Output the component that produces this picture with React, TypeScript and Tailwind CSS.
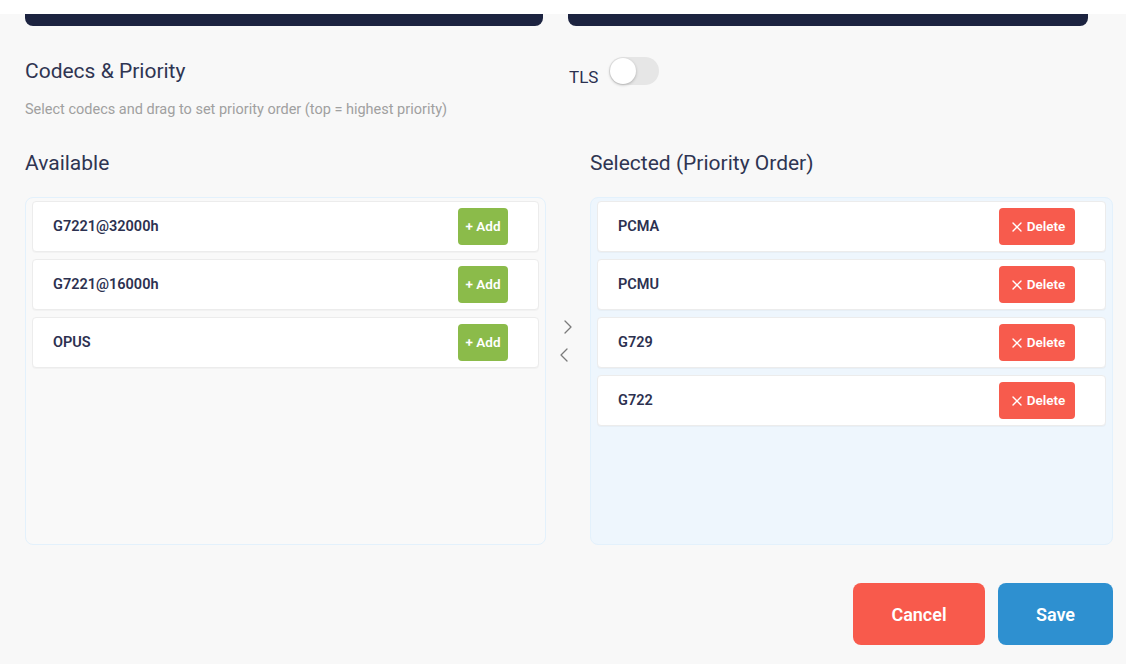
import React, { useState } from "react";
import { ChevronLeft, ChevronRight, X } from "lucide-react";

const available = ["G7221@32000h", "G7221@16000h", "OPUS"];
const initialSelected = ["PCMA", "PCMU", "G729", "G722"];

function CodecRow({ name, kind, onClick }: { name: string; kind: "add" | "delete"; onClick: () => void }) {
  return (
    <div className="flex h-[51px] items-center justify-between rounded-[4px] border border-[#ececec] bg-white pl-[20px] pr-[30px] shadow-[0_1px_1px_rgba(0,0,0,0.03)]">
      <span className="text-[14.5px] font-semibold text-[#2c3150]">{name}</span>
      {kind === "add" ? (
        <button
          onClick={onClick}
          className="flex h-[37px] w-[50px] items-center justify-center rounded-[4px] bg-[#8bbb4a] text-[13.5px] font-semibold text-white"
        >
          + Add
        </button>
      ) : (
        <button
          onClick={onClick}
          className="flex h-[37px] w-[76px] items-center justify-center gap-[2px] rounded-[4px] bg-[#f75b4d] text-[13.5px] font-semibold text-white"
        >
          <X size={16} strokeWidth={2} />
          Delete
        </button>
      )}
    </div>
  );
}

export default function App() {
  const [tls, setTls] = useState(false);
  const [avail, setAvail] = useState<string[]>(available);
  const [selected, setSelected] = useState<string[]>(initialSelected);

  return (
    <div className="h-[664px] w-full overflow-hidden bg-[#f8f8f8] font-['Roboto',sans-serif]">
      {/* top strip with the end of the previous inputs */}
      <div className="h-[14px] bg-white" />
      <div className="flex gap-[25px] pl-[25px]">
        <div className="h-[12px] w-[518px] rounded-b-[8px] bg-[#1c2340]" />
        <div className="h-[12px] w-[520px] rounded-b-[8px] bg-[#1c2340]" />
      </div>

      {/* heading row */}
      <div className="flex pl-[25px] pt-[31px]">
        <div className="w-[544px]">
          <h2 className="text-[21px] leading-[28px] text-[#2f3552]">Codecs &amp; Priority</h2>
          <p className="mt-[15px] text-[14.5px] leading-[20px] text-[#a0a0a0]">
            Select codecs and drag to set priority order (top = highest priority)
          </p>
        </div>
        <div className="flex items-start gap-[11px]">
          <span className="mt-[10px] text-[17px] leading-[20px] text-[#2a3050]">TLS</span>
          <button
            onClick={() => setTls(!tls)}
            className={`relative h-[28px] w-[50px] rounded-full ${tls ? "bg-[#2d8fd0]" : "bg-[#e6e6e6]"}`}
          >
            <span
              className={`absolute top-[1px] h-[26px] w-[26px] rounded-full bg-white shadow-[0_1px_3px_rgba(0,0,0,0.25)] ${tls ? "left-[23px]" : "left-[1px]"}`}
            />
          </button>
        </div>
      </div>

      {/* column titles */}
      <div className="mt-[29px] flex pl-[25px]">
        <h3 className="w-[565px] text-[21px] leading-[28px] text-[#2f3552]">Available</h3>
        <h3 className="text-[21px] leading-[28px] text-[#2f3552]">Selected (Priority Order)</h3>
      </div>

      {/* lists */}
      <div className="mt-[20px] flex pl-[25px] pr-[13px]">
        <div className="flex h-[348px] w-[521px] flex-col gap-[7px] rounded-[8px] border border-[#e3f1fc] bg-[#f9f9f9] px-[6px] pt-[3px]">
          {avail.map((c) => (
            <CodecRow
              key={c}
              name={c}
              kind="add"
              onClick={() => {
                setAvail((prev) => prev.filter((p) => p !== c));
                setSelected((prev) => [...prev, c]);
              }}
            />
          ))}
        </div>

        <div className="flex w-[44px] flex-col items-center gap-[4px] pt-[118px] text-[#7a7a7a]">
          <ChevronRight size={24} strokeWidth={1.3} />
          <ChevronLeft size={24} strokeWidth={1.3} className="-ml-[8px]" />
        </div>

        <div className="flex h-[348px] flex-1 flex-col gap-[7px] rounded-[8px] border border-[#e3f1fc] bg-[#eef6fd] px-[6px] pt-[3px]">
          {selected.map((c) => (
            <CodecRow
              key={c}
              name={c}
              kind="delete"
              onClick={() => {
                setSelected((prev) => prev.filter((p) => p !== c));
                setAvail((prev) => [...prev, c]);
              }}
            />
          ))}
        </div>
      </div>

      {/* actions */}
      <div className="mt-[38px] flex justify-end gap-[13px] pr-[13px]">
        <button className="h-[62px] w-[132px] rounded-[8px] bg-[#f85a4c] text-[18px] font-semibold text-white">
          Cancel
        </button>
        <button className="h-[62px] w-[115px] rounded-[8px] bg-[#2e90d0] text-[18px] font-semibold text-white">
          Save
        </button>
      </div>
    </div>
  );
}
